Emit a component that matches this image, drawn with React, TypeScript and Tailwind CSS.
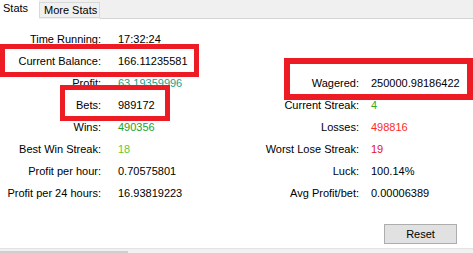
const rows = [
  { label: "Time Running:", value: "17:32:24" },
  { label: "Current Balance:", value: "166.11235581" },
  {
    label: "Profit:",
    value: "63.19359996",
    color: "text-[#1aa08c]",
    rLabel: "Wagered:",
    rValue: "250000.98186422",
  },
  { label: "Bets:", value: "989172", rLabel: "Current Streak:", rValue: "4", rColor: "text-[#3aa81c]" },
  {
    label: "Wins:",
    value: "490356",
    color: "text-[#27a127]",
    rLabel: "Losses:",
    rValue: "498816",
    rColor: "text-[#ff2a2a]",
  },
  {
    label: "Best Win Streak:",
    value: "18",
    color: "text-[#6cc628]",
    rLabel: "Worst Lose Streak:",
    rValue: "19",
    rColor: "text-[#e0102c]",
  },
  { label: "Profit per hour:", value: "0.70575801", rLabel: "Luck:", rValue: "100.14%" },
  { label: "Profit per 24 hours:", value: "16.93819223", rLabel: "Avg Profit/bet:", rValue: "0.00006389" },
];

type Row = {
  label: string;
  value: string;
  color?: string;
  rLabel?: string;
  rValue?: string;
  rColor?: string;
};

function StatRow({ row }: { row: Row }) {
  return (
    <div className="flex h-[22px] items-center whitespace-nowrap">
      <div className="w-[101px] text-right">{row.label}</div>
      <div className={`w-[159px] pl-[17px] ${row.color ?? "text-black"}`}>{row.value}</div>
      {row.rLabel && (
        <>
          <div className="w-[99px] text-right">{row.rLabel}</div>
          <div className={`pl-[12px] ${row.rColor ?? "text-black"}`}>{row.rValue}</div>
        </>
      )}
    </div>
  );
}

export default function App() {
  return (
    <div
      className="relative w-[473px] h-[253px] overflow-hidden bg-white text-[11px] leading-none text-black"
      style={{ fontFamily: '"Liberation Sans", Arial, sans-serif' }}
    >
      {/* Tabs */}
      <div className="flex h-[19px] bg-[#f0f0f0] whitespace-nowrap">
        <div className="w-[39px] h-[19px] bg-white pl-[3px] pt-[3px]">Stats</div>
        <div className="mt-[2px] w-[61px] h-[16px] border border-[#d9d9d9] bg-[#f0f0f0] pl-[4px] pt-[2px]">
          More Stats
        </div>
        <div className="flex-1 border-b border-[#d4d4d4]" />
      </div>

      {/* Stats */}
      <div className="pt-[9px]">
        {rows.map((row) => (
          <StatRow key={row.label} row={row} />
        ))}
      </div>

      <div className="flex justify-end pr-[16px] mt-[20px]">
        <button className="w-[73px] h-[20px] border border-[#adadad] bg-[#e1e1e1] text-[11px]">Reset</button>
      </div>

      <div className="mt-[4px] h-[1px] bg-[#e3e3e3]" />
      <div className="h-[2px] bg-[#f0f0f0]" />
      <div className="flex h-[2px]">
        <div className="w-[128px] bg-[#cfcfcf]" />
        <div className="flex-1 bg-[#f3f3f3]" />
      </div>

      {/* red highlight boxes */}
      <div className="absolute left-0 top-[44px] w-[199px] h-[33px] border-[5px] border-[#ed1c24]" />
      <div className="absolute left-[60px] top-[85px] w-[110px] h-[36px] border-[5px] border-[#ed1c24]" />
      <div className="absolute left-[284px] top-[58px] w-[189px] h-[42px] border-[6px] border-[#ed1c24]" />
    </div>
  );
}
